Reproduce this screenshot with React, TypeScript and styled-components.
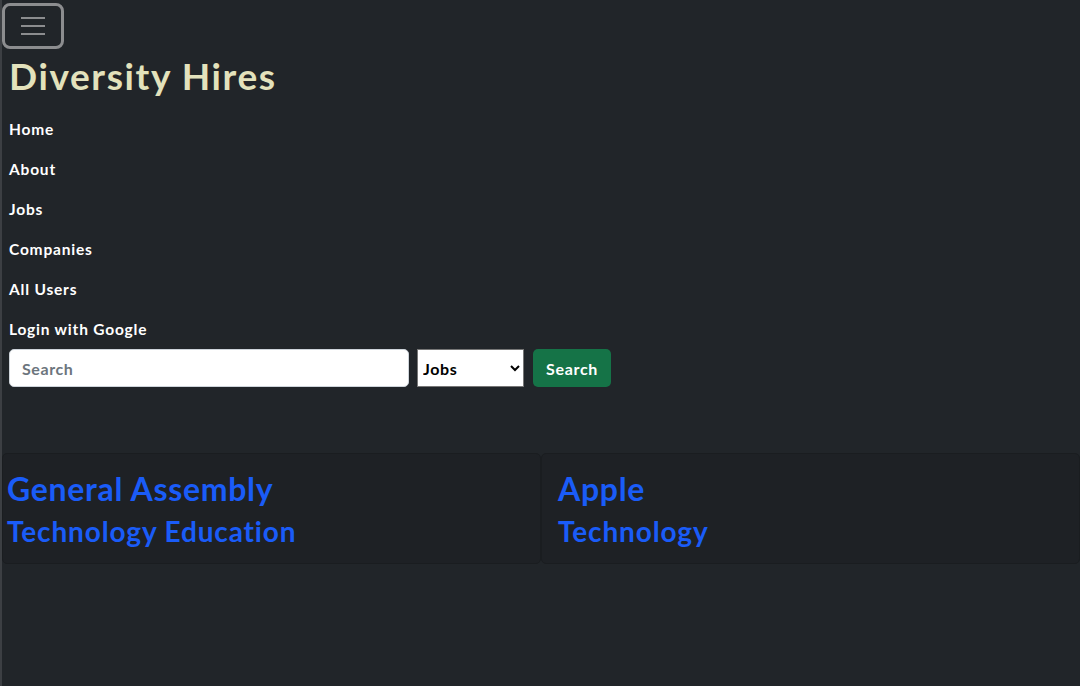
import React from "react";
import styled, { createGlobalStyle } from "styled-components";

const Global = createGlobalStyle`
  html, body { margin: 0; padding: 0; background: #212529; }
  body { font-family: "Lato", "Noto Sans", sans-serif; color: #fff; }
  * { box-sizing: border-box; }
`;

const Page = styled.div`
  min-height: 686px;
  border-left: 2px solid #3c3f43;
  display: flex;
  flex-direction: column;
`;

const Header = styled.header`
  display: flex;
  flex-direction: column;
  align-items: flex-start;
  padding: 3px 0 0 0;
`;

const Toggler = styled.button`
  width: 62px;
  height: 46px;
  border: 3px solid #8c8d8f;
  border-radius: 8px;
  background: transparent;
  display: flex;
  flex-direction: column;
  align-items: center;
  justify-content: center;
  gap: 6px;
  padding: 0;
`;

const Bar = styled.span`
  display: block;
  width: 24px;
  height: 2px;
  background: #8c8d8f;
`;

const Brand = styled.h1`
  margin: 3px 0 3px 7px;
  font-size: 37px;
  font-weight: 700;
  line-height: 48px;
  color: #e3e2bc;
  letter-spacing: 1.6px;
`;

const Nav = styled.nav`
  display: flex;
  flex-direction: column;
  margin: 6px 0 0 7px;
`;

const NavLink = styled.a`
  display: block;
  height: 40px;
  line-height: 40px;
  font-size: 15.5px;
  font-weight: 700;
  letter-spacing: 0.8px;
  color: #fff;
  text-decoration: none;
`;

const SearchForm = styled.form`
  display: flex;
  align-items: center;
  margin: 0 0 0 7px;
`;

const SearchInput = styled.input`
  width: 400px;
  height: 38px;
  border: 1px solid #ced4da;
  border-radius: 5px;
  padding: 0 12px;
  font-family: inherit;
  font-size: 16px;
  font-weight: 700;
  letter-spacing: 0.6px;
  &::placeholder { color: #6c757d; }
`;

const Select = styled.select`
  width: 107px;
  height: 38px;
  margin-left: 8px;
  border: 1px solid #767676;
  border-radius: 0;
  background: #fff;
  font-family: inherit;
  font-size: 16px;
  font-weight: 700;
  letter-spacing: 0.6px;
  color: #000;
  padding: 0 1px;
`;

const Button = styled.button`
  height: 38px;
  width: 78px;
  margin-left: 9px;
  padding: 0;
  border: none;
  border-radius: 5px;
  background: #157347;
  color: #fff;
  font-family: inherit;
  font-size: 16px;
  font-weight: 700;
  letter-spacing: 0.7px;
`;

const CardRow = styled.div`
  display: grid;
  grid-template-columns: 539px 1fr;
  margin-top: 66px;
`;

const Card = styled.div<{ $pad: number }>`
  background: #1e2125;
  border: 1px solid #1a1d20;
  border-radius: 5px;
  height: 111px;
  padding: 15px ${(p) => p.$pad}px;
  display: flex;
  flex-direction: column;
`;

const CardTitle = styled.a`
  font-size: 32px;
  font-weight: 700;
  line-height: 40px;
  letter-spacing: 0.7px;
  color: #1a5cf8;
  text-decoration: none;
`;

const CardSub = styled.a`
  font-size: 28px;
  font-weight: 700;
  line-height: 40px;
  letter-spacing: 0.85px;
  color: #1a5cf8;
  text-decoration: none;
  margin-top: 2px;
`;

const companies = [
  { name: "General Assembly", industry: "Technology Education", pad: 4 },
  { name: "Apple", industry: "Technology", pad: 16 },
];

export default function App() {
  return (
    <>
      <Global />
      <Page>
        <Header>
          <Toggler aria-label="Toggle navigation">
            <Bar />
            <Bar />
            <Bar />
          </Toggler>
          <Brand>Diversity Hires</Brand>
          <Nav>
            {["Home", "About", "Jobs", "Companies", "All Users", "Login with Google"].map((l) => (
              <NavLink key={l} href="#">{l}</NavLink>
            ))}
          </Nav>
          <SearchForm onSubmit={(e) => e.preventDefault()}>
            <SearchInput placeholder="Search" />
            <Select defaultValue="Jobs">
              <option>Jobs</option>
              <option>Companies</option>
            </Select>
            <Button type="submit">Search</Button>
          </SearchForm>
        </Header>
        <CardRow>
          {companies.map((c) => (
            <Card key={c.name} $pad={c.pad}>
              <CardTitle href="#">{c.name}</CardTitle>
              <CardSub href="#">{c.industry}</CardSub>
            </Card>
          ))}
        </CardRow>
      </Page>
    </>
  );
}
